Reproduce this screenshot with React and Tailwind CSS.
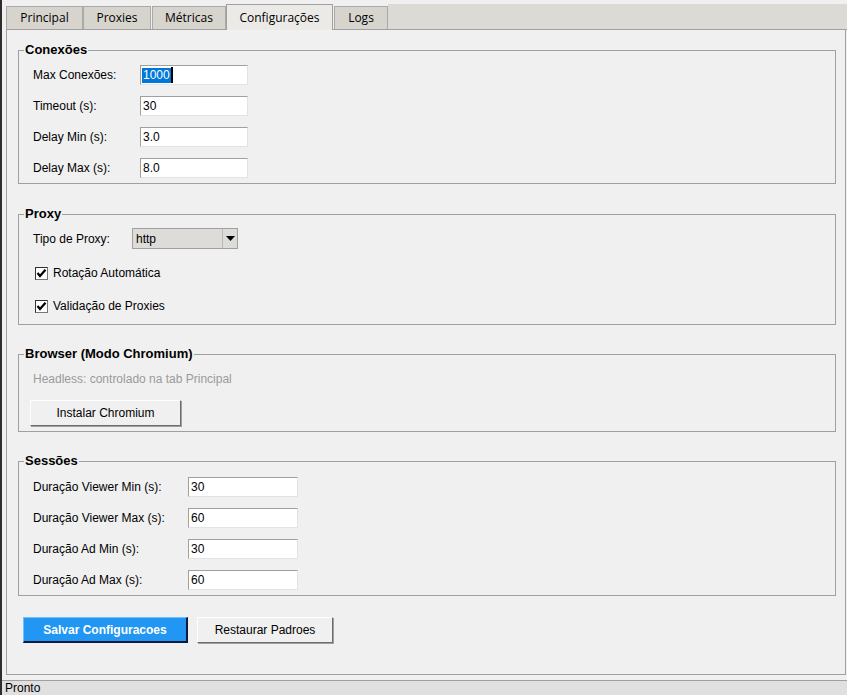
import React from "react";

const body = { fontFamily: '"Liberation Sans", Arial, sans-serif' };
const tabFont = { fontFamily: '"Open Sans", "Noto Sans", sans-serif' };

function Field({ value, selected, w = "w-[108px]" }) {
  return (
    <div
      className={`${w} h-[20px] bg-white border border-[#e3e3e3] border-t-[#a0a0a0] border-l-[#a0a0a0] pl-[1px] flex items-center text-[12px] text-black`}
    >
      {selected ? (
        <>
          <span className="bg-[#0078d7] text-white leading-[15px] px-[1px]">{value}</span>
          <span className="w-[2px] h-[16px] bg-black" />
        </>
      ) : (
        <span className="px-[1px]">{value}</span>
      )}
    </div>
  );
}

function Group({ title, children, className = "" }) {
  return (
    <fieldset className={`border border-[#a0a0a0] ${className}`}>
      <legend className="ml-[5px] px-[1px] text-[13px] leading-[16px] font-bold text-black">
        {title}
      </legend>
      {children}
    </fieldset>
  );
}

function Check({ label }) {
  return (
    <div className="flex items-center h-[18px] pl-[2px]">
      <span className="w-[13px] h-[13px] bg-white border border-[#333] border-r-[#777] border-b-[#777] flex items-center justify-center">
        <svg width="11" height="11" viewBox="0 0 11 11">
          <path d="M1.5 5 L4 8 L9.5 1.8" fill="none" stroke="#000" strokeWidth="2.2" />
        </svg>
      </span>
      <span className="ml-[5px] text-[12px] text-black">{label}</span>
    </div>
  );
}

function Tab({ label, w, active, gap }) {
  const g = gap ? "ml-[1px]" : "";
  if (active)
    return (
      <div
        style={tabFont}
        className={`${w} ${g} h-[26px] mb-[-1px] bg-[#eceae6] border border-b-0 border-[#a0a0a0] flex items-center justify-center text-[12px] text-black`}
      >
        {label}
      </div>
    );
  return (
    <div
      style={tabFont}
      className={`${w} ${g} h-[23px] bg-[#d7d4ce] border border-b-0 border-[#a9a9a9] flex items-center justify-center text-[12px] text-black`}
    >
      {label}
    </div>
  );
}

export default function App() {
  const conexoes = [
    ["Max Conexões:", "1000", true],
    ["Timeout (s):", "30"],
    ["Delay Min (s):", "3.0"],
    ["Delay Max (s):", "8.0"],
  ];
  const sessoes = [
    ["Duração Viewer Min (s):", "30"],
    ["Duração Viewer Max (s):", "60"],
    ["Duração Ad Min (s):", "30"],
    ["Duração Ad Max (s):", "60"],
  ];

  return (
    <div
      style={body}
      className="w-[847px] h-[695px] bg-[#f0f0f0] border-l-2 border-[#2e2e2e] flex flex-col overflow-hidden"
    >
      {/* tabs */}
      <div className="mt-[4px] ml-[4px] h-[26px] border-b border-[#a0a0a0] flex items-end">
        <Tab label="Principal" w="w-[77px]" />
        <Tab label="Proxies" w="w-[68px]" />
        <Tab label="Métricas" w="w-[74px]" gap />
        <Tab label="Configurações" w="w-[107px]" active />
        <Tab label="Logs" w="w-[54px]" gap />
        <div className="flex-1 self-stretch bg-[#dcdad5]" />
      </div>

      {/* panel */}
      <div className="ml-[4px] mr-[1px] h-[645px] border border-t-0 border-[#a0a0a0] pl-[11px] pr-[9px] flex flex-col">
        <Group title="Conexões" className="mt-[12px]">
          <div className="pt-[7px] pb-[5px] pl-[14px] flex flex-col gap-[11px]">
            {conexoes.map(([l, v, s]) => (
              <div key={l} className="flex items-center">
                <span className="w-[107px] text-[12px] text-black">{l}</span>
                <Field value={v} selected={s} />
              </div>
            ))}
          </div>
        </Group>

        <Group title="Proxy" className="mt-[22px]">
          <div className="pt-[6px] pb-[9px] pl-[14px] flex flex-col">
            <div className="flex items-center">
              <span className="w-[99px] text-[12px] text-black">Tipo de Proxy:</span>
              <div className="w-[106px] h-[21px] bg-[#dddcd8] border border-[#a0a0a0] flex items-center">
                <span className="flex-1 pl-[3px] text-[12px] text-black">http</span>
                <div className="w-[15px] h-full border-l border-[#b8b8b8] flex items-center justify-center">
                  <svg width="9" height="5" viewBox="0 0 9 5">
                    <path d="M0 0 H9 L4.5 5 Z" fill="#000" />
                  </svg>
                </div>
              </div>
            </div>
            <div className="mt-[15px]">
              <Check label="Rotação Automática" />
            </div>
            <div className="mt-[15px]">
              <Check label="Validação de Proxies" />
            </div>
          </div>
        </Group>

        <Group title="Browser (Modo Chromium)" className="mt-[21px]">
          <div className="pt-[8px] pb-[5px] pl-[11px] flex flex-col items-start">
            <span className="ml-[3px] leading-[18px] text-[12px] text-[#9a9a9a]">
              Headless: controlado na tab Principal
            </span>
            <button className="mt-[12px] w-[151px] h-[26px] bg-[#f0f0f0] border border-[#fdfdfd] border-r-[#6d6d6d] border-b-[#6d6d6d] shadow-[1px_1px_0_#a0a0a0] text-[12px] text-black">
              Instalar Chromium
            </button>
          </div>
        </Group>

        <Group title="Sessões" className="mt-[21px]">
          <div className="pt-[8px] pb-[5px] pl-[14px] flex flex-col gap-[11px]">
            {sessoes.map(([l, v]) => (
              <div key={l} className="flex items-center">
                <span className="w-[155px] text-[12px] text-black">{l}</span>
                <Field value={v} w="w-[110px]" />
              </div>
            ))}
          </div>
        </Group>

        <div className="mt-[21px] ml-[5px] flex gap-[9px]">
          <button className="w-[165px] h-[26px] bg-[#2196f3] border border-[#6cc0ff] border-r-2 border-b-2 border-r-[#0b1a3d] border-b-[#0b1a3d] text-white font-bold text-[12px]">
            Salvar Configuracoes
          </button>
          <button className="w-[136px] h-[26px] bg-[#f0f0f0] border border-[#fdfdfd] border-r-[#6d6d6d] border-b-[#6d6d6d] shadow-[1px_1px_0_#a0a0a0] text-[12px] text-black">
            Restaurar Padroes
          </button>
        </div>
      </div>

      {/* status bar */}
      <div className="mt-[5px] h-[15px] border-t border-[#a0a0a0] bg-[#e0e0e0] pl-[3px] text-[12px] leading-[14px] text-black">
        Pronto
      </div>
    </div>
  );
}
